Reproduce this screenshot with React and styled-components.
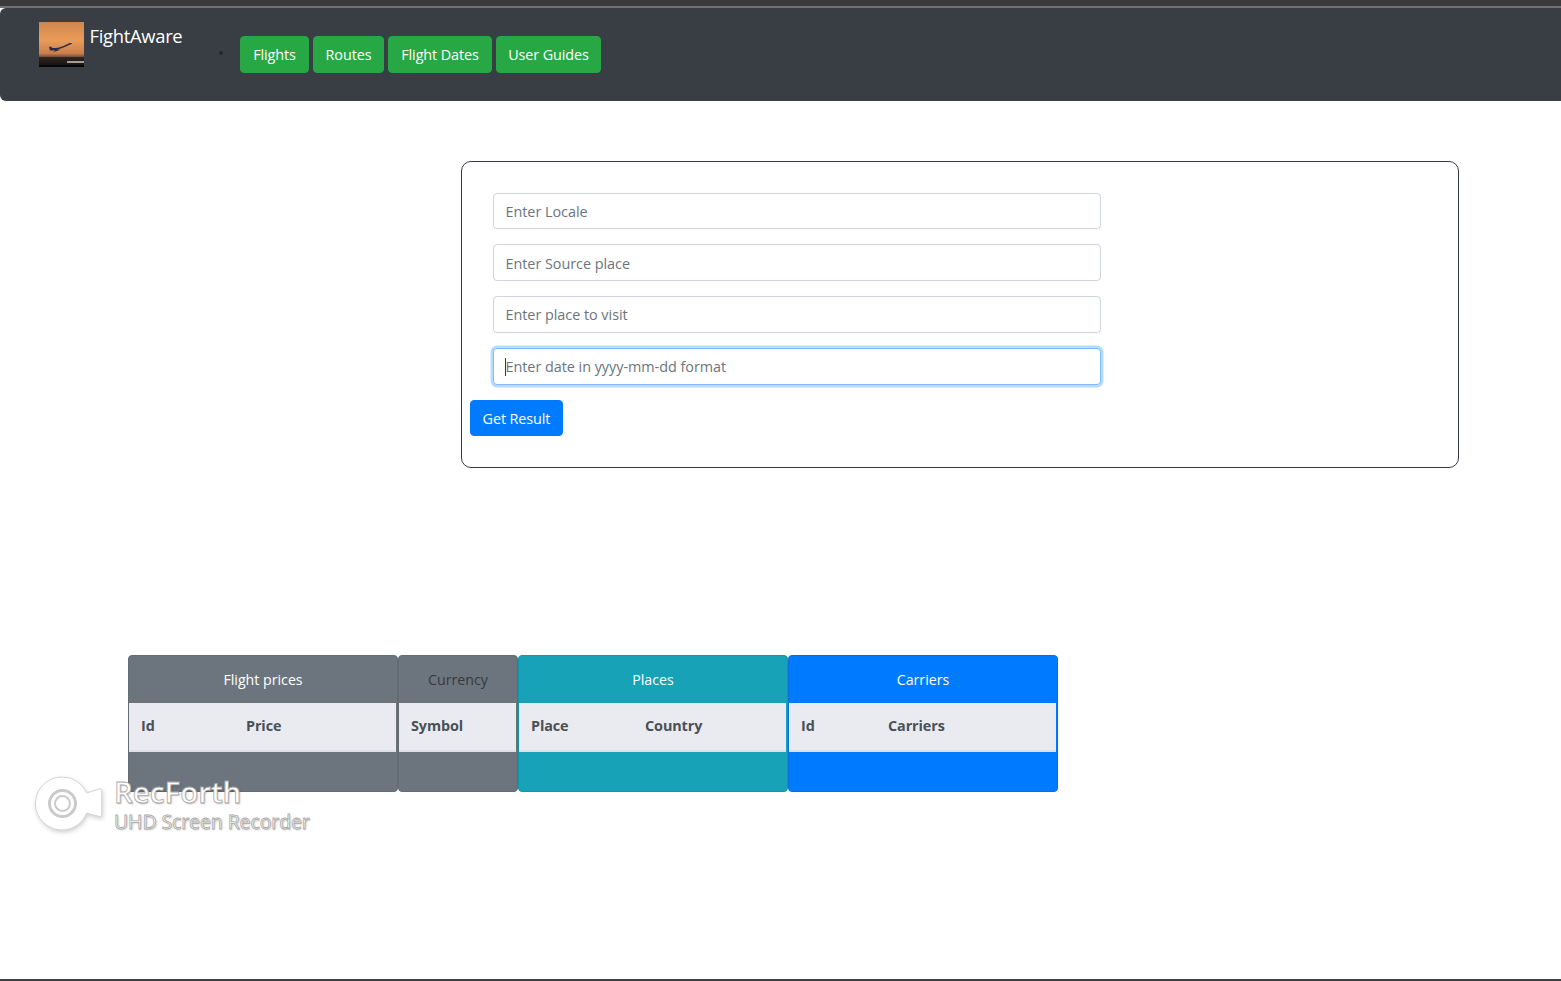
import React from "react";
import styled, { createGlobalStyle } from "styled-components";

const Global = createGlobalStyle`
  * { box-sizing: border-box; }
  html, body { margin: 0; padding: 0; background: #fff; }
  body { font-family: "Open Sans", "Noto Sans", "Liberation Sans", sans-serif; color: #212529; }
  ::placeholder { color: #6c757d; opacity: 1; }
`;

const Page = styled.div`
  position: relative;
  height: 981px;
  overflow: hidden;
  display: flex;
  flex-direction: column;
`;
const TopStrip = styled.div`
  height: 8px;
  flex: none;
  background: #3a3a3b;
  border-bottom: 2px solid #6f7073;
`;
const Navbar = styled.nav`
  flex: none;
  height: 93px;
  background: #383e44;
  border-radius: 6px 0 0 6px;
  display: flex;
  align-items: flex-start;
  padding-left: 39px;
`;
const Brand = styled.a`
  display: flex;
  align-items: flex-start;
  width: 180px;
  margin-top: 14px;
  color: #fff;
  font-size: 18.4px;
  line-height: 28px;
  letter-spacing: -0.3px;
`;
const BrandName = styled.span`
  margin-left: 5.5px;
`;
const Dot = styled.span`
  width: 4px;
  height: 4px;
  margin-top: 43px;
  border-radius: 50%;
  background: #23272c;
  flex: none;
`;
const NavList = styled.div`
  display: flex;
  gap: 4px;
  margin: 28px 0 0 17px;
`;
const NavButton = styled.button`
  height: 37px;
  width: ${(p) => p.$w}px;
  padding: 0;
  border: 1px solid #28a745;
  border-radius: 4px;
  background: #28a745;
  color: #fff;
  font: 400 14.4px "Open Sans", sans-serif;
  letter-spacing: -0.1px;
`;
const FormCard = styled.form`
  flex: none;
  width: 998px;
  height: 307px;
  margin: 60px 0 0 461px;
  padding: 31px 8px 0;
  border: 1px solid #343a40;
  border-radius: 10px;
`;
const FieldWrap = styled.div`
  position: relative;
  width: 608px;
  margin: 0 0 15px 23px;
`;
const Field = styled.input`
  display: block;
  width: 100%;
  height: ${(p) => p.$h}px;
  padding: ${(p) => (p.$nudge ? "1px" : "0")} 11.5px 0;
  background: #fff;
  border: 1px solid ${(p) => (p.$focus ? "#80bdff" : "#ced4da")};
  border-radius: 4px;
  box-shadow: ${(p) => (p.$focus ? "0 0 0 2.5px rgba(0,123,255,.28)" : "none")};
  font: 400 14.4px "Open Sans", sans-serif;
  letter-spacing: -0.03px;
  color: #495057;
  outline: none;
`;
const Caret = styled.span`
  position: absolute;
  left: 12px;
  top: 10px;
  width: 1px;
  height: 18px;
  background: #343a40;
`;
const Submit = styled.button`
  display: block;
  width: 93px;
  height: 36px;
  padding: 0;
  border: 1px solid #007bff;
  border-radius: 4px;
  background: #007bff;
  color: #fff;
  font: 400 14.4px "Open Sans", sans-serif;
  letter-spacing: -0.1px;
`;
const Tables = styled.div`
  flex: none;
  display: flex;
  margin: 187px 0 0 128px;
`;
const Group = styled.section`
  width: ${(p) => p.$w}px;
  height: 137px;
  background: ${(p) => p.$bg};
  border: 1px solid ${(p) => p.$edge};
  border-radius: 4px;
  overflow: hidden;
`;
const GroupTitle = styled.div`
  height: 47px;
  display: flex;
  align-items: center;
  justify-content: center;
  color: ${(p) => p.$ink};
  font-size: 14.2px;
`;
const HeadRow = styled.div`
  height: 49px;
  margin-right: 1px;
  padding-bottom: 2px;
  display: grid;
  grid-template-columns: ${(p) => p.$cols};
  align-items: center;
  background: #e9ebf0;
  border-bottom: 2px solid #dee2e6;
  color: #495057;
  font-size: 14.4px;
  font-weight: 700;
  letter-spacing: -0.1px;
`;
const HeadCell = styled.div`
  padding-left: 12px;
`;
const BottomRule = styled.div`
  margin-top: auto;
  height: 2px;
  flex: none;
  background: #3c3f44;
`;
const Watermark = styled.div`
  position: absolute;
  left: 35px;
  top: 776px;
  display: flex;
  gap: 11px;
  pointer-events: none;
`;
const MarkText = styled.div`
  display: flex;
  flex-direction: column;
  margin-top: -1px;
  color: #fff;
  -webkit-text-stroke: 0.8px #a9a9a9;
  text-shadow: 1px 1px 2px rgba(0,0,0,.28);
  font-family: "Open Sans", sans-serif;
`;
const MarkTitle = styled.span`
  font-size: 29.5px;
  font-weight: 600;
  line-height: 34px;
`;
const MarkSub = styled.span`
  margin-top: 2px;
  font-size: 19.5px;
  line-height: 22px;
  letter-spacing: -0.1px;
`;

const Logo = () => (
  <svg width="45" height="45" viewBox="0 0 45 45" style={{ flex: "none" }}>
    <defs>
      <linearGradient id="sky" x1="0" y1="0" x2="0" y2="1">
        <stop offset="0" stopColor="#cf8750" />
        <stop offset=".4" stopColor="#ea9c58" />
        <stop offset=".7" stopColor="#c97f4c" />
        <stop offset=".77" stopColor="#7a4f3a" />
        <stop offset=".79" stopColor="#2e2420" />
        <stop offset="1" stopColor="#12100f" />
      </linearGradient>
    </defs>
    <rect width="45" height="45" fill="url(#sky)" />
    <path d="M10 25 L11 28.5 C15 29 22 27 28 24 C31 22.5 32.5 22 33 21.5 C33 21 31.5 20.5 29.5 21.5 L24 24.2 C21 25.6 17 26 13.5 26 L11.5 24.5z" fill="#2a2b45" />
    <path d="M17 27.5 l-3 2.5 5 -1.5 2 -1z" fill="#1e1f33" />
    <rect x="28" y="39" width="17" height="2" fill="#a99c90" />
    <rect x="0" y="43" width="45" height="2" fill="#070707" />
  </svg>
);

const CameraMark = () => (
  <svg width="68" height="56" viewBox="0 0 68 56" style={{ flex: "none", filter: "drop-shadow(1px 2px 2px rgba(0,0,0,.18))" }}>
    <path d="M27 1 A26.5 26.5 0 0 1 51.7 17 L64.5 12.8 Q66.7 12.2 66.7 14.5 V39 Q66.7 41.2 64.5 40.6 L51.7 37 A26.5 26.5 0 1 1 27 1z" fill="#fff" stroke="#d4d4d4" strokeWidth="1" />
    <circle cx="27.5" cy="27.5" r="13" fill="none" stroke="#cacaca" strokeWidth="3" />
    <circle cx="27.5" cy="27.5" r="7.5" fill="none" stroke="#cacaca" strokeWidth="2" />
  </svg>
);

const links = [["Flights", 69], ["Routes", 71], ["Flight Dates", 104], ["User Guides", 105]];
const groups = [
  { w: 270, bg: "#6c757d", edge: "#636b73", ink: "#fff", title: "Flight prices", cols: "105px 1fr", heads: ["Id", "Price"] },
  { w: 120, bg: "#6c757d", edge: "#636b73", ink: "#343a40", title: "Currency", cols: "1fr", heads: ["Symbol"] },
  { w: 270, bg: "#17a2b8", edge: "#1496aa", ink: "#fff", title: "Places", cols: "114px 1fr", heads: ["Place", "Country"] },
  { w: 270, bg: "#007bff", edge: "#0a70dc", ink: "#fff", title: "Carriers", cols: "87px 1fr", heads: ["Id", "Carriers"] },
];

export default function App() {
  return (
    <Page>
      <Global />
      <TopStrip />
      <Navbar>
        <Brand>
          <Logo />
          <BrandName>FightAware</BrandName>
        </Brand>
        <Dot />
        <NavList>
          {links.map(([label, w]) => (
            <NavButton key={label} type="button" $w={w}>{label}</NavButton>
          ))}
        </NavList>
      </Navbar>
      <FormCard onSubmit={(e) => e.preventDefault()}>
        <FieldWrap><Field $h={36} placeholder="Enter Locale" /></FieldWrap>
        <FieldWrap><Field $h={37} $nudge placeholder="Enter Source place" /></FieldWrap>
        <FieldWrap><Field $h={37} placeholder="Enter place to visit" /></FieldWrap>
        <FieldWrap>
          <Field $h={37} $focus placeholder="Enter date in yyyy-mm-dd format" />
          <Caret />
        </FieldWrap>
        <Submit type="submit">Get Result</Submit>
      </FormCard>
      <Tables>
        {groups.map((g) => (
          <Group key={g.title} $w={g.w} $bg={g.bg} $edge={g.edge}>
            <GroupTitle $ink={g.ink}>{g.title}</GroupTitle>
            <HeadRow $cols={g.cols}>
              {g.heads.map((h) => <HeadCell key={h}>{h}</HeadCell>)}
            </HeadRow>
          </Group>
        ))}
      </Tables>
      <BottomRule />
      <Watermark>
        <CameraMark />
        <MarkText>
          <MarkTitle>RecForth</MarkTitle>
          <MarkSub>UHD Screen Recorder</MarkSub>
        </MarkText>
      </Watermark>
    </Page>
  );
}
